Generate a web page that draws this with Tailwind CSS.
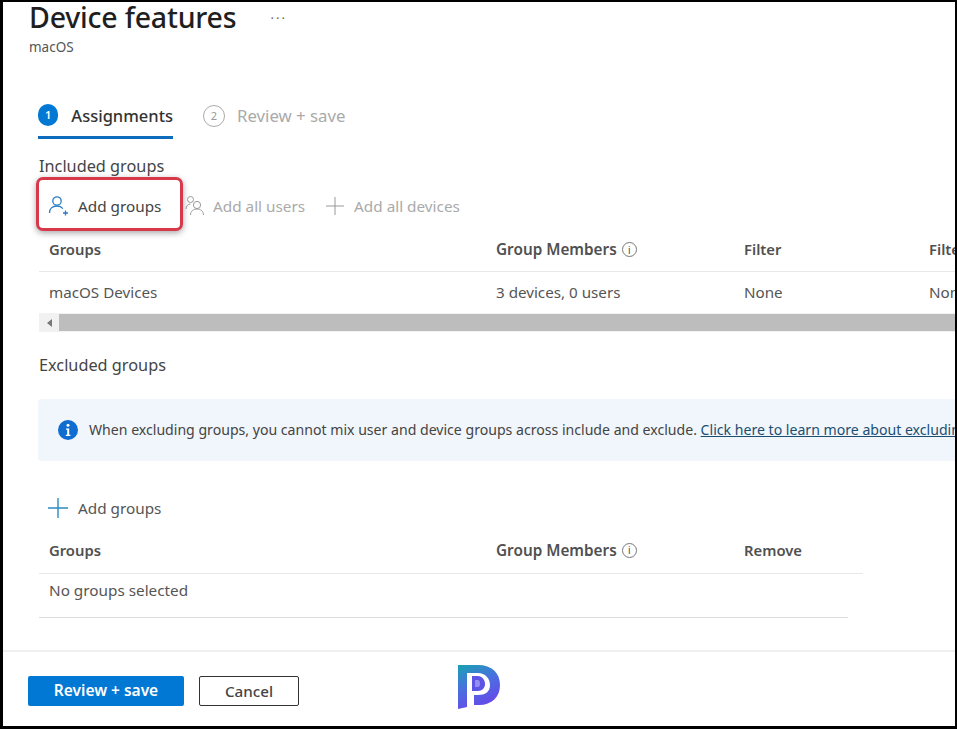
<!DOCTYPE html>
<html lang="en">
<head>
  <meta charset="UTF-8" />
  <title>Device features</title>
  <script src="https://cdn.jsdelivr.net/npm/@tailwindcss/browser@4"></script>
</head>
<body class="bg-white">
  <div class="w-[957px] h-[729px] overflow-hidden flex flex-col bg-white border-black border-l-[3px] border-t-2 border-b-[3px] border-r-2 font-['Noto_Sans',sans-serif] text-[#444]">

    <main class="flex-1 min-h-0 overflow-hidden">
      <!-- Title -->
      <div class="pl-[26px] flex items-start h-[30px]">
        <h1 class="text-[28.5px] leading-[30px] font-medium text-[#1f1f1f] tracking-[-0.2px]">Device features</h1>
        <span class="ml-[34px] mt-[6px] text-[13px] leading-[20px] tracking-[2px] text-[#666]">···</span>
      </div>
      <div class="pl-[26px] mt-[6px] text-[13.5px] leading-[18px] text-[#555]">macOS</div>

      <!-- Steps -->
      <div class="ml-[35px] mt-[46px] flex h-[37px] items-start">
        <div class="flex items-center gap-[12px] h-[37px] pb-[8px] border-b-[3px] border-[#0f6cbd] w-[135px]">
          <span class="w-[22px] h-[22px] rounded-full bg-[#0078d4] text-white text-[11px] font-semibold flex items-center justify-center">1</span>
          <span class="ml-px mt-[2px] text-[16.5px] leading-[22px] font-medium text-[#333]">Assignments</span>
        </div>
        <div class="ml-[30px] flex items-center gap-[12px] h-[22px] mt-[3px]">
          <span class="w-[22px] h-[22px] rounded-full border border-[#aaa] text-[#999] text-[11px] flex items-center justify-center">2</span>
          <span class="text-[16.8px] leading-[22px] text-[#aaa]">Review + save</span>
        </div>
      </div>

      <!-- Included groups -->
      <div class="ml-[36px] mt-[16px] text-[16.3px] leading-[22px] text-[#444]">Included groups</div>
      <div class="ml-[33px] flex items-center h-[54px]">
        <div class="w-[147px] h-[54px] flex items-center pl-[9px] pt-[4px] gap-[8px] border-[3px] border-[#d8394a] rounded-[7px] shadow-[0_2px_6px_rgba(0,0,0,0.35)] bg-white">
          <svg class="w-[22px] h-[22px] text-[#2b7cc4]" viewBox="0 0 22 22" fill="none" stroke="currentColor" stroke-width="1.3">
            <circle cx="9" cy="6" r="4.2"/>
            <path d="M1.5 18c0-4.4 3.2-7 7.5-7 2.600 0 4.600 1 5.900 2.600"/>
            <path d="M17.500 15.500v5M15 18h5"/>
          </svg>
          <span class="text-[15.3px] text-[#444]">Add groups</span>
        </div>
        <svg class="ml-[2px] mt-[4px] w-[20px] h-[22px] text-[#999]" viewBox="0 0 20 22" fill="none" stroke="currentColor" stroke-width="1">
          <circle cx="5.500" cy="4.500" r="3"/>
          <path d="M1 14c0-3 2-5 4.500-5"/>
          <circle cx="12" cy="10" r="3.600"/>
          <path d="M5.500 20c0-3.600 2.800-6 6.500-6s6.500 2.400 6.500 6"/>
        </svg>
        <span class="ml-[8px] mt-[4px] text-[15.3px] text-[#aaa]">Add all users</span>
        <svg class="ml-[21px] mt-[4px] w-[18px] h-[18px] text-[#999]" viewBox="0 0 18 18" fill="none" stroke="currentColor" stroke-width="1">
          <path d="M9 0v18M0 9h18"/>
        </svg>
        <span class="ml-[10px] mt-[4px] text-[15.3px] text-[#aaa]">Add all devices</span>
      </div>

      <!-- Included table -->
      <div class="ml-[36px] overflow-hidden">
        <div class="w-[1000px] grid grid-cols-[447px_248px_185px_120px] pl-[10px] h-[41px] pb-[3px] items-center border-b border-[#e8e8e8] text-[14.8px]">
          <span class="font-semibold text-[#505050]">Groups</span>
          <span class="text-[15.3px] font-semibold text-[#505050] flex items-center gap-[5px]">Group Members
            <span class="w-[15px] h-[15px] rounded-full border border-[#777] text-[10px] leading-none font-normal flex items-center justify-center">i</span>
          </span>
          <span class="font-semibold text-[#505050]">Filter</span>
          <span class="font-semibold text-[#505050]">Filter mode</span>
        </div>
        <div class="w-[1000px] grid grid-cols-[447px_248px_185px_120px] pl-[10px] h-[41px] items-center text-[15.2px] text-[#555]">
          <span>macOS Devices</span>
          <span>3 devices, 0 users</span>
          <span>None</span>
          <span>None</span>
        </div>
        <!-- Scrollbar -->
        <div class="h-[19px] flex bg-[#f1f1f1] items-center">
          <div class="w-[20px] flex justify-center"><span class="w-0 h-0 border-y-[4px] border-y-transparent border-r-[5px] border-r-[#777]"></span></div>
          <div class="flex-1 h-[17px] bg-[#bdbdbd]"></div>
        </div>
      </div>

      <!-- Excluded groups -->
      <div class="ml-[36px] mt-[22px] text-[16.3px] leading-[22px] text-[#444]">Excluded groups</div>

      <div class="ml-[35px] mt-[23px] h-[62px] flex items-center pl-[20px] bg-[#f0f6fb] rounded-l-[3px] whitespace-nowrap overflow-hidden">
        <svg class="w-[20px] h-[20px] shrink-0" viewBox="0 0 20 20">
          <circle cx="10" cy="10" r="10" fill="#0f6cd0"/>
          <circle cx="10" cy="5.200" r="1.500" fill="#fff"/>
          <path d="M8 8.500h3.200v6.200H12.500v1.300H7.800v-1.300H9.200V9.800H8z" fill="#fff"/>
        </svg>
        <span class="ml-[11px] text-[14.1px] text-[#444]">When excluding groups, you cannot mix user and device groups across include and exclude. <a class="underline text-[#1b4f72]">Click here to learn more about excluding groups</a></span>
      </div>

      <!-- Add groups -->
      <div class="ml-[45px] mt-[35px] h-[24px] flex items-center gap-[10px]">
        <svg class="w-[20px] h-[20px] text-[#2b8cc4]" viewBox="0 0 20 20" fill="none" stroke="currentColor" stroke-width="1.4">
          <path d="M10 0v20M0 10h20"/>
        </svg>
        <span class="text-[15.3px] text-[#555]">Add groups</span>
      </div>

      <!-- Excluded table -->
      <div class="ml-[36px] mt-[11px] w-[824px]">
        <div class="grid grid-cols-[447px_248px_119px] pl-[10px] h-[43px] pb-[4px] items-center border-b border-[#e8e8e8] text-[14.8px]">
          <span class="font-semibold text-[#505050]">Groups</span>
          <span class="text-[15.3px] font-semibold text-[#505050] flex items-center gap-[5px]">Group Members
            <span class="w-[15px] h-[15px] rounded-full border border-[#777] text-[10px] leading-none font-normal flex items-center justify-center">i</span>
          </span>
          <span class="font-semibold text-[#505050]">Remove</span>
        </div>
        <div class="w-[809px] pl-[10px] h-[44px] pb-[10px] flex items-center border-b border-[#ddd] text-[15.3px] text-[#555]">No groups selected</div>
      </div>
    </main>

    <!-- Footer -->
    <footer class="relative h-[76px] shrink-0 border-t-2 border-[#f0f0f0] flex items-start pl-[25px] pt-[24px] gap-[15px]">
      <button class="w-[156px] h-[30px] bg-[#0078d4] rounded-[2px] text-white text-[15.5px] font-semibold">Review + save</button>
      <button class="w-[100px] h-[30px] bg-white border border-[#333] rounded-[2px] text-[#444] text-[15.2px] font-medium">Cancel</button>
      <svg class="absolute left-[451px] top-[8px] w-[50px] h-[54px] blur-[0.6px]" viewBox="0 0 50 52">
        <defs>
          <linearGradient id="logo" x1="0.2" y1="0" x2="0.6" y2="1">
            <stop offset="0" stop-color="#1f9bb8"/>
            <stop offset="0.45" stop-color="#4a6fe0"/>
            <stop offset="1" stop-color="#6a45ea"/>
          </linearGradient>
        </defs>
        <path fill="url(#logo)" fill-rule="evenodd" d="M4 4H24C38 4 46 12 46 24C46 36 38 44 25 44H20V34H24C31 34 36 31 36 24C36 17 31 12 24 12H13V46L4 48Z"/>
        <path fill="#5c55e6" d="M18 15H24C28 15 31 19 31 23C31 27 28 30 24 30H18Z"/>
        <path fill="#fff" d="M21 19H24C25.500 19 26 21 26 23C26 25 25 26 24 26H21Z" opacity="0.35"/>
      </svg>
    </footer>
  </div>
</body>
</html>
